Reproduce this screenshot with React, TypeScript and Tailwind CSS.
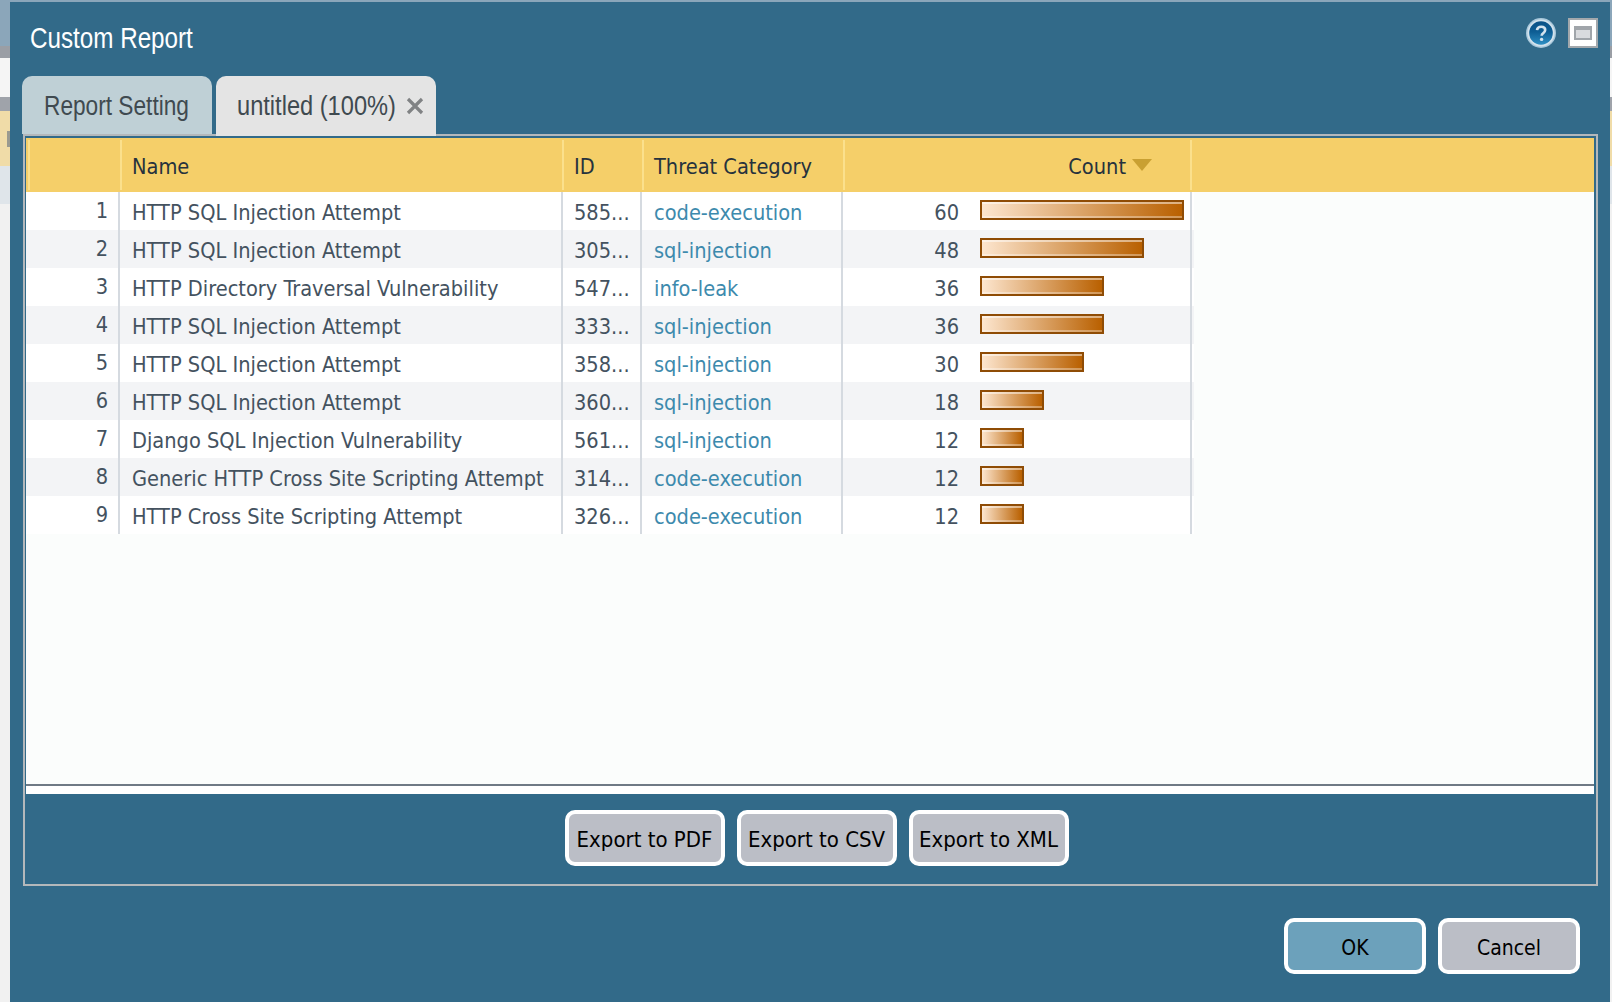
const rows = [
  { name: "HTTP SQL Injection Attempt", id: "585...", category: "code-execution", count: 60 },
  { name: "HTTP SQL Injection Attempt", id: "305...", category: "sql-injection", count: 48 },
  { name: "HTTP Directory Traversal Vulnerability", id: "547...", category: "info-leak", count: 36 },
  { name: "HTTP SQL Injection Attempt", id: "333...", category: "sql-injection", count: 36 },
  { name: "HTTP SQL Injection Attempt", id: "358...", category: "sql-injection", count: 30 },
  { name: "HTTP SQL Injection Attempt", id: "360...", category: "sql-injection", count: 18 },
  { name: "Django SQL Injection Vulnerability", id: "561...", category: "sql-injection", count: 12 },
  { name: "Generic HTTP Cross Site Scripting Attempt", id: "314...", category: "code-execution", count: 12 },
  { name: "HTTP Cross Site Scripting Attempt", id: "326...", category: "code-execution", count: 12 },
];

const exportLabels = ["Export to PDF", "Export to CSV", "Export to XML"];

const condensed = "font-['DejaVu_Sans',sans-serif] font-stretch-condensed";
const bodyFont = `${condensed} text-[21.6px]`;

function EdgeStrip({ width, notch }: { width: string; notch?: boolean }) {
  return (
    <div className={`flex flex-col shrink-0 ${width}`}>
      <div className="h-[46px] bg-[#8ba6ba]" />
      <div className="h-[12px] bg-[#9a9ea5]" />
      <div className="h-[39px] bg-[#f5f5f5]" />
      <div className="h-[14px] bg-[#9fa3aa]" />
      <div className="h-[55px] bg-[#f0dca8] flex justify-end items-center">
        {notch && <div className="w-[3px] h-[16px] bg-[#9a9a90]" />}
      </div>
      <div className="h-[38px] bg-[#dfe5ea]" />
      <div className="flex-1 bg-[#f1f1f1]" />
    </div>
  );
}

function HelpIcon() {
  return (
    <svg width="30" height="30" viewBox="0 0 30 30">
      <defs>
        <linearGradient id="helpBall" x1="0" y1="0" x2="0" y2="1">
          <stop offset="0%" stopColor="#0a5287" />
          <stop offset="45%" stopColor="#0d5d94" />
          <stop offset="100%" stopColor="#2f90c4" />
        </linearGradient>
      </defs>
      <circle cx="15" cy="15" r="15" fill="#a9c8db" />
      <circle cx="15" cy="15" r="13.6" fill="#d2e2ec" />
      <circle cx="15" cy="15" r="11.8" fill="url(#helpBall)" />
      <path d="M11 12.2c.3-2.3 2-3.4 4.2-3.4 2.4 0 4 1.3 4 3.3 0 1.6-.9 2.4-2.1 3.2-1 .7-1.4 1.2-1.4 2.4" fill="none" stroke="#d3e3ee" strokeWidth="2.6" />
      <circle cx="15.6" cy="21.4" r="1.7" fill="#d3e3ee" />
    </svg>
  );
}

function WindowIcon() {
  return (
    <div className="w-[30px] h-[30px] bg-white border-2 border-[#a3a8ac] flex items-center justify-center">
      <div className="w-[18px] h-[14px] bg-[#d9dbde] border-2 border-t-[4px] border-[#a0a5aa]" />
    </div>
  );
}

function CloseIcon() {
  return (
    <svg width="18" height="18" viewBox="0 0 18 18" className="ml-[8px]">
      <path d="M2 2 16 16M16 2 2 16" stroke="#808284" strokeWidth="3.2" />
    </svg>
  );
}

function CountBar({ count }: { count: number }) {
  return (
    <div
      className="relative h-[20px] border-2 border-[#8f4c05] bg-linear-to-r/srgb from-[#fde6cf] to-[#b96000]"
      style={{ width: (count * 10) / 3 + 4 }}
    >
      <div className="h-[2px] bg-white/50" />
      <div className="absolute bottom-0 left-0 right-0 h-[2px] bg-white/35" />
    </div>
  );
}

function HeaderRow() {
  const cell = "my-[2px] border-l-2 border-[#fbe08c] flex items-center pt-[4px] shrink-0";
  return (
    <div className={`flex h-[54px] bg-[#f5cf69] text-[#26323d] ${bodyFont}`}>
      <div className="w-[2px] shrink-0" />
      <div className={`${cell} w-[92px]`} />
      <div className={`${cell} w-[442px] pl-[10px]`}>Name</div>
      <div className={`${cell} w-[80px] pl-[10px]`}>ID</div>
      <div className={`${cell} w-[201px] pl-[10px]`}>Threat Category</div>
      <div className={`${cell} w-[347px] justify-end pr-[38px]`}>
        Count
        <svg width="20" height="12" viewBox="0 0 20 12" className="ml-[6px] mb-[4px]">
          <path d="M0 0h20L10 12z" fill="#c9a032" />
        </svg>
      </div>
      <div className={`${cell} flex-1 border-[#f8d25f]`} />
    </div>
  );
}

function DataRow({ row, index }: { row: (typeof rows)[number]; index: number }) {
  const sep = "h-full flex items-center shrink-0 border-r-2 border-[#d5dae0]";
  return (
    <div className={`flex h-[38px] w-[1168px] text-[#44525f] ${bodyFont} ${index % 2 ? "bg-[#f3f4f6]" : "bg-white"}`}>
      <div className={`${sep} w-[94px] justify-end pr-[10px]`}>{index + 1}</div>
      <div className={`${sep} w-[443px] pl-[12px] pt-[4px]`}>{row.name}</div>
      <div className={`${sep} w-[79px] pl-[11px] pt-[4px]`}>{row.id}</div>
      <div className={`${sep} w-[201px] pl-[12px] pt-[4px] text-[#3d8aad]`}>{row.category}</div>
      <div className={`${sep} w-[349px]`}>
        <span className="w-[116px] pt-[4px] text-right">{row.count}</span>
        <div className="ml-[21px] mb-[2px]">
          <CountBar count={row.count} />
        </div>
      </div>
    </div>
  );
}

function ActionButton({ label, primary }: { label: string; primary?: boolean }) {
  return (
    <button className={`w-[142px] h-[56px] pt-[6px] rounded-[10px] border-4 border-white text-black text-[21px] ${condensed} ${primary ? "bg-[#6ca1bb]" : "bg-[#bbbec6]"}`}>
      {label}
    </button>
  );
}

export default function App() {
  return (
    <div className="flex w-[1612px] h-[1002px] overflow-hidden">
      <EdgeStrip width="w-[10px]" notch />
      <div className="flex-1 flex flex-col min-w-0">
        <div className="h-[2px] bg-[#8ba6ba] shrink-0" />
        <div className="flex-1 flex flex-col bg-[#326a89]">
          {/* Title */}
          <div className="h-[74px] flex items-start justify-between pl-[20px] pr-[12px] shrink-0">
            <h1 className="mt-[16px] text-[29px] leading-[40px] text-white font-['Liberation_Sans',sans-serif] scale-x-[0.835] origin-left">
              Custom Report
            </h1>
            <div className="flex gap-[12px] mt-[16px]">
              <HelpIcon />
              <WindowIcon />
            </div>
          </div>

          {/* Tabs */}
          <div className="flex items-start gap-[4px] pl-[12px] h-[58px] shrink-0">
            <div className="w-[190px] h-[58px] pt-[2px] rounded-t-[10px] bg-[#bfd0d6] flex items-center pl-[22px] text-[#3f4a50]">
              <span className="text-[27px] font-['Liberation_Sans',sans-serif] scale-x-[0.84] origin-left whitespace-nowrap">Report Setting</span>
            </div>
            <div className="w-[220px] h-[60px] rounded-t-[10px] bg-[#e4e4e4] flex items-center pl-[21px] text-[#3f4a50] relative z-10">
              <span className="w-[161px] text-[27px] font-['Liberation_Sans',sans-serif] scale-x-[0.875] origin-left whitespace-nowrap">untitled (100%)</span>
              <CloseIcon />
            </div>
          </div>

          {/* Panel */}
          <div className="ml-[13px] mr-[12px] h-[752px] shrink-0 border-2 border-[#b4b8bb] pt-[2px] pl-[1px] pr-[2px] flex flex-col">
            <div className="flex-1 bg-[#fbfdfc] flex flex-col">
              <HeaderRow />
              {rows.map((row, index) => (
                <DataRow key={index} row={row} index={index} />
              ))}
            </div>
            <div className="h-[10px] shrink-0 bg-white border-t-2 border-[#6f7a85]" />
            <div className="h-[90px] shrink-0 flex justify-center gap-[12px] pt-[16px] pl-[13px]">
              {exportLabels.map((label) => (
                <button key={label} className={`w-[160px] h-[56px] pt-[3px] rounded-[10px] border-4 border-white bg-[#bbbec6] text-black text-[22px] ${condensed}`}>
                  {label}
                </button>
              ))}
            </div>
          </div>

          {/* Actions */}
          <div className="flex justify-end gap-[12px] pt-[32px] pr-[30px]">
            <ActionButton label="OK" primary />
            <ActionButton label="Cancel" />
          </div>
        </div>
      </div>
      <EdgeStrip width="w-[2px]" />
    </div>
  );
}
